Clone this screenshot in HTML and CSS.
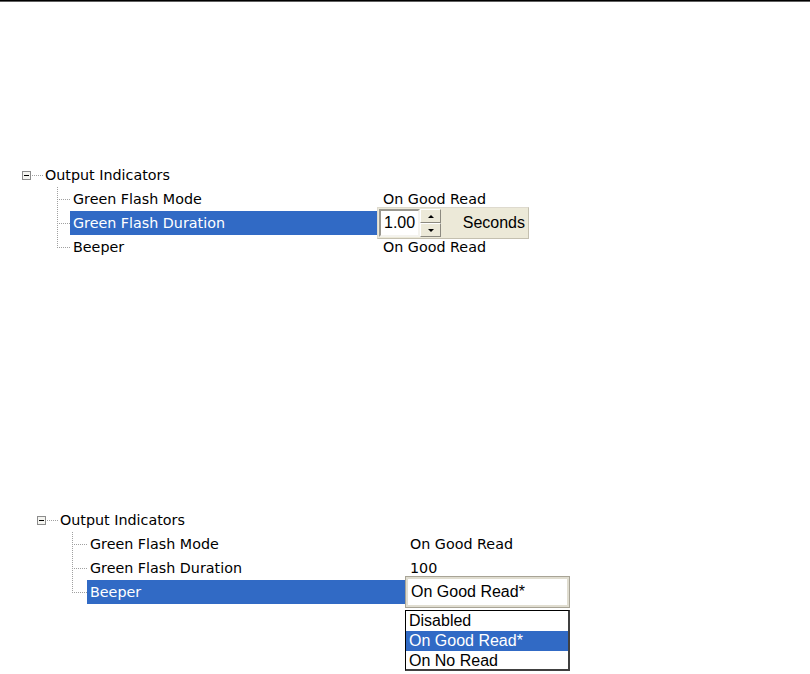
FILE: index.html
```html
<!DOCTYPE html>
<html>
<head>
<meta charset="utf-8">
<link rel="stylesheet" href="styles.css">
</head>
<body>
<div class="topline"></div>

<div class="tree tree-a">
  <div class="row parent">
    <span class="expander"><span class="minus"></span></span>
    <svg class="hconn" width="11" height="24"><path d="M0 12.5H11" /></svg>
    <span class="ptext">Output Indicators</span>
  </div>
  <div class="children">
    <div class="row child">
      <svg class="conn" width="13" height="24"><path d="M0.5 0V24M0 12.5H13" /></svg>
      <span class="label">Green Flash Mode</span>
      <span class="value">On Good Read</span>
    </div>
    <div class="row child">
      <svg class="conn" width="13" height="24"><path d="M0.5 0V24M0 12.5H13" /></svg>
      <span class="label selected">Green Flash Duration</span>
      <div class="spin">
        <div class="spin-input">1.00</div>
        <div class="spin-btns">
          <div class="spin-btn"><span class="arr-up"></span></div>
          <div class="spin-btn"><span class="arr-down"></span></div>
        </div>
        <div class="spin-label">Seconds</div>
      </div>
    </div>
    <div class="row child">
      <svg class="conn" width="13" height="24"><path d="M0.5 0V12.5M0 12.5H13" /></svg>
      <span class="label">Beeper</span>
      <span class="value">On Good Read</span>
    </div>
  </div>
</div>

<div class="tree tree-b">
  <div class="row parent">
    <span class="expander"><span class="minus"></span></span>
    <svg class="hconn" width="11" height="24"><path d="M0 12.5H11" /></svg>
    <span class="ptext">Output Indicators</span>
  </div>
  <div class="children">
    <div class="row child">
      <svg class="conn" width="15" height="24"><path d="M0.5 0V24M0 12.5H15" /></svg>
      <span class="label">Green Flash Mode</span>
      <span class="value">On Good Read</span>
    </div>
    <div class="row child">
      <svg class="conn" width="15" height="24"><path d="M0.5 0V24M0 12.5H15" /></svg>
      <span class="label">Green Flash Duration</span>
      <span class="value">100</span>
    </div>
    <div class="row child">
      <svg class="conn" width="15" height="24"><path d="M0.5 0V12.5M0 12.5H15" /></svg>
      <span class="label selected">Beeper</span>
      <div class="combo">
        <div class="combo-field">On Good Read*</div>
        <ul class="droplist">
          <li>Disabled</li>
          <li class="hl">On Good Read*</li>
          <li>On No Read</li>
        </ul>
      </div>
    </div>
  </div>
</div>
</body>
</html>
```

FILE: styles.css
```css
html, body {
  margin: 0;
  padding: 0;
  background: #ffffff;
}
body {
  min-height: 674px;
  font-family: "DejaVu Sans", "Liberation Sans", sans-serif;
  font-size: 14.3px;
  color: #000000;
}
.topline {
  height: 1px;
  background: #000000;
  border-bottom: 1px solid #606060;
}
.tree-a {
  margin-top: 161px;
}
.tree-b {
  margin-top: 249px;
}
.row {
  display: flex;
  align-items: center;
  height: 24px;
  line-height: 24px;
  white-space: nowrap;
}
.tree-a .parent { padding-left: 22px; }
.tree-b .parent { padding-left: 37px; }
.expander {
  box-sizing: border-box;
  width: 9px;
  height: 9px;
  border: 1px solid #8c8c8c;
  background: #f4f4f0;
  display: flex;
  align-items: center;
  justify-content: center;
}
.minus {
  width: 5px;
  height: 1px;
  background: #000000;
}
.hconn {
  margin-left: 1px;
  flex: none;
}
.hconn path, .conn path {
  stroke: #a0a0a0;
  stroke-width: 1;
  stroke-dasharray: 1 1;
  fill: none;
}
.ptext {
  margin-left: 2px;
}
.tree-a .children { margin-left: 57px; }
.tree-b .children { margin-left: 72px; }
.conn {
  flex: none;
}
.label {
  box-sizing: border-box;
  height: 24px;
  padding-left: 3px;
}
.tree-a .label { width: 307px; }
.tree-b .label { width: 318px; }
.selected {
  background: #316ac5;
  color: #ffffff;
}
.tree-a .value { padding-left: 6px; }
.tree-b .value { padding-left: 5px; }

/* spin box */
.spin {
  box-sizing: border-box;
  display: flex;
  width: 152px;
  height: 32px;
  flex: none;
  background: #ece9d8;
  border: 1px solid #dedace;
  border-right-color: #c4c0b0;
  border-bottom-color: #c4c0b0;
  padding: 1px;
  font-family: "Liberation Sans", Arial, sans-serif;
  font-size: 16px;
}
.spin-input {
  box-sizing: border-box;
  width: 41px;
  height: 28px;
  background: #ffffff;
  border: 2px solid #ffffff;
  border-top-color: #9a9890;
  border-left-color: #9a9890;
  border-right-color: #f4f3ee;
  border-bottom-color: #f4f3ee;
  line-height: 24px;
  padding-left: 3px;
}
.spin-btns {
  display: flex;
  flex-direction: column;
  width: 21px;
  height: 28px;
}
.spin-btn {
  box-sizing: border-box;
  flex: 1;
  background: #ece9d8;
  border: 1px solid #ffffff;
  border-right-color: #8c8a80;
  border-bottom-color: #8c8a80;
  display: flex;
  align-items: center;
  justify-content: center;
}
.arr-up {
  width: 0;
  height: 0;
  border-left: 3px solid transparent;
  border-right: 3px solid transparent;
  border-bottom: 3px solid #000000;
}
.arr-down {
  width: 0;
  height: 0;
  border-left: 3px solid transparent;
  border-right: 3px solid transparent;
  border-top: 3px solid #000000;
}
.spin-label {
  flex: 1;
  text-align: right;
  padding-right: 2px;
  line-height: 28px;
}

/* combo */
.combo {
  position: relative;
  flex: none;
  width: 165px;
  height: 32px;
  font-family: "Liberation Sans", Arial, sans-serif;
  font-size: 16px;
}
.combo-field {
  box-sizing: border-box;
  width: 165px;
  height: 32px;
  background: #ffffff;
  border: 1px solid #a8a496;
  box-shadow: inset 0 0 0 2px #e0ddd0;
  line-height: 30px;
  padding-left: 5px;
}
.droplist {
  position: absolute;
  left: 0;
  top: 34px;
  z-index: 5;
  box-sizing: border-box;
  width: 165px;
  height: 61px;
  overflow: hidden;
  margin: 0;
  padding: 0;
  list-style: none;
  background: #ffffff;
  border: 1px solid #000000;
  border-right: 2px solid #404040;
  border-bottom: 2px solid #404040;
}
.droplist li {
  height: 20px;
  line-height: 20px;
  padding-left: 3px;
}
.droplist li.hl {
  background: #316ac5;
  color: #ffffff;
}
```
